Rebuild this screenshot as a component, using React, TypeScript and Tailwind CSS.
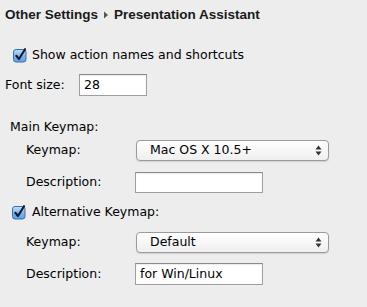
import React from "react";

function Check() {
  return (
    <svg width="16" height="16" viewBox="0 0 16 16" className="block">
      <defs>
        <linearGradient id="cbg" x1="0" y1="0" x2="0" y2="1">
          <stop offset="0" stopColor="#c4defa" />
          <stop offset="0.5" stopColor="#7eb6ee" />
          <stop offset="1" stopColor="#5aa2ea" />
        </linearGradient>
      </defs>
      <rect x="1.5" y="2.5" width="12.5" height="12.5" rx="2.5" fill="url(#cbg)" stroke="#3f6fa6" strokeWidth="1" />
      <path d="M4.3 8.8 L7 12 L13 2.2" fill="none" stroke="#101a33" strokeWidth="2.1" strokeLinecap="round" strokeLinejoin="round" />
    </svg>
  );
}

function Select({ value }: { value: string }) {
  return (
    <div className="w-[193px] h-[21px] rounded-[4px] border border-[#9b9b9b] bg-gradient-to-b from-[#ffffff] to-[#efefef] shadow-[0_1px_1px_rgba(0,0,0,0.12)] flex items-center pl-[13px] pr-[6px]">
      <span className="flex-1 leading-none">{value}</span>
      <svg width="7" height="11" viewBox="0 0 7 11">
        <path d="M3.5 0.5 L6.5 4.5 L0.5 4.5 Z" fill="#333" />
        <path d="M3.5 10.5 L6.5 6.5 L0.5 6.5 Z" fill="#333" />
      </svg>
    </div>
  );
}

function Field({ value, w }: { value?: string; w: string }) {
  return (
    <div className={`${w} h-full border border-[#9f9f9f] border-t-[#8a8a8a] bg-white shadow-[inset_0_1px_1px_rgba(0,0,0,0.08)] flex items-center pl-[4px]`}>
      <span className="leading-none">{value}</span>
    </div>
  );
}

export default function App() {
  return (
    <div
      className="w-[367px] h-[307px] bg-[#ededed] text-black text-[12.5px] flex flex-col"
      style={{ fontFamily: '"DejaVu Sans", "Noto Sans", sans-serif' }}
    >
      <div
        className="h-[30px] flex items-center pl-[5px] font-bold gap-[4px] text-[13.5px] text-[#1a1a1a]"
        style={{ fontFamily: '"Liberation Sans", Arial, sans-serif' }}
      >
        <span>Other Settings</span>
        <svg width="8" height="10" viewBox="0 0 8 10">
          <path d="M2 1.5 L6 5 L2 8.5 Z" fill="#555" />
        </svg>
        <span>Presentation Assistant</span>
      </div>
      <div className="mt-[14px] h-[22px] flex items-center pl-[12px] gap-[4px]">
        <Check />
        <span>Show action names and shortcuts</span>
      </div>
      <div className="mt-[8px] h-[22px] flex items-center pl-[5px]">
        <span className="w-[74px]">Font size:</span>
        <Field value="28" w="w-[68px]" />
      </div>
      <div className="mt-[20px] h-[22px] flex items-center pl-[10px]">
        <span>Main Keymap:</span>
      </div>
      <div className="mt-[2px] h-[21px] flex items-center pl-[26px]">
        <span className="w-[110px]">Keymap:</span>
        <Select value="Mac OS X 10.5+" />
      </div>
      <div className="mt-[11px] h-[21px] flex items-center pl-[26px]">
        <span className="w-[109px]">Description:</span>
        <Field w="w-[128px]" />
      </div>
      <div className="mt-[8px] h-[22px] flex items-center pl-[11px] gap-[5px]">
        <Check />
        <span>Alternative Keymap:</span>
      </div>
      <div className="mt-[9px] h-[21px] flex items-center pl-[26px]">
        <span className="w-[110px]">Keymap:</span>
        <Select value="Default" />
      </div>
      <div className="mt-[10px] h-[22px] flex items-center pl-[26px]">
        <span className="w-[109px]">Description:</span>
        <Field value="for Win/Linux" w="w-[128px]" />
      </div>
    </div>
  );
}
